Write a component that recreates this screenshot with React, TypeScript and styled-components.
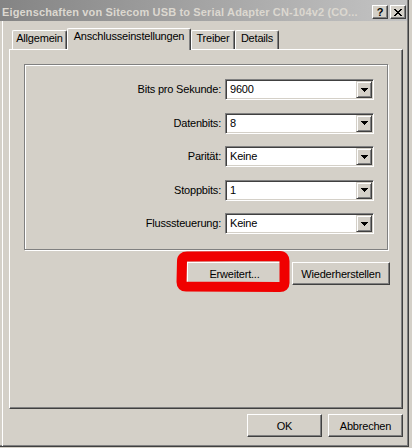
import React from "react";
import styled, { createGlobalStyle } from "styled-components";

const GlobalStyle = createGlobalStyle`
  html, body { margin: 0; padding: 0; background: #d4d0c8; }
  body {
    font-family: "Liberation Sans", Arial, sans-serif;
    font-size: 11px;
    letter-spacing: -0.2px;
    color: #000;
  }
`;

const Window = styled.div`
  position: relative;
  width: 409px;
  height: 447px;
  box-sizing: border-box;
  background: #d4d0c8;
  border-right: 1px solid #404040;
  border-bottom: 1px solid #404040;
  box-shadow: inset -1px -1px 0 #808080;
  display: flex;
  flex-direction: column;
`;

const TitleBar = styled.div`
  height: 21px;
  margin-right: 1px;
  box-sizing: border-box;
  background: linear-gradient(to right, #848484, #c4c4c4);
  display: flex;
  align-items: flex-end;
  gap: 2px;
  padding: 0 1px 2px 2px;
`;

const TitleText = styled.div`
  flex: 1;
  min-width: 0;
  height: 14px;
  line-height: 14px;
  font-weight: bold;
  color: #dcd8d0;
  white-space: nowrap;
  overflow: hidden;
  letter-spacing: 0.15px;
  margin-right: 6px;
`;

const TitleButton = styled.div`
  width: 16px;
  height: 14px;
  box-sizing: border-box;
  background: #d4d0c8;
  border: 1px solid;
  border-color: #fff #404040 #404040 #fff;
  box-shadow: inset -1px -1px 0 #808080;
  display: flex;
  align-items: center;
  justify-content: center;
  font-weight: bold;
  font-size: 11px;
  line-height: 12px;
  letter-spacing: 0;
`;

const Body = styled.div`
  flex: 1;
  margin-left: 2px;
  border-left: 1px solid #fff;
  padding: 7px 5px 0 6px;
  display: flex;
  flex-direction: column;
`;

const TabRow = styled.div`
  height: 21px;
  display: flex;
  align-items: flex-end;
  padding-left: 3px;
  position: relative;
  z-index: 1;
`;

const Tab = styled.div<{ $active?: boolean; $w: number }>`
  width: ${(p) => p.$w}px;
  height: ${(p) => (p.$active ? 22 : 19)}px;
  margin-bottom: ${(p) => (p.$active ? -1 : 0)}px;
  box-sizing: border-box;
  background: #d4d0c8;
  border-left: 1px solid #fff;
  border-top: 1px solid #fff;
  border-right: 1px solid #404040;
  border-radius: 2px 2px 0 0;
  box-shadow: inset -1px 0 0 #808080;
  text-align: center;
  line-height: 14px;
  white-space: nowrap;
`;

const Panel = styled.div`
  height: 360px;
  box-sizing: border-box;
  border: 1px solid;
  border-color: #fff #404040 #404040 #fff;
  box-shadow: inset -1px -1px 0 #808080;
  padding: 14px 14px 0 14px;
  display: flex;
  flex-direction: column;
`;

const GroupBox = styled.div`
  height: 186px;
  box-sizing: border-box;
  border: 1px solid #808080;
  box-shadow: inset 1px 1px 0 #fff, 1px 1px 0 #fff;
  padding: 14px 13px 0 0;
  display: grid;
  grid-template-columns: 1fr 149px;
  grid-auto-rows: 21px;
  column-gap: 4px;
  row-gap: 12.5px;
  align-content: start;
`;

const Label = styled.div`
  text-align: right;
  line-height: 21px;
  white-space: nowrap;
`;

const Combo = styled.div`
  height: 21px;
  box-sizing: border-box;
  border: 1px solid;
  border-color: #808080 #fff #fff #808080;
  box-shadow: inset 1px 1px 0 #404040, inset -1px -1px 0 #d4d0c8;
  background: #fff;
  display: flex;
  align-items: center;
  padding: 1px 1px 1px 4px;
`;

const ComboText = styled.div`
  flex: 1;
  line-height: 17px;
`;

const DropButton = styled.div`
  width: 16px;
  height: 17px;
  box-sizing: border-box;
  background: #d4d0c8;
  border: 1px solid;
  border-color: #d4d0c8 #404040 #404040 #d4d0c8;
  box-shadow: inset 1px 1px 0 #fff, inset -1px -1px 0 #808080;
  display: flex;
  align-items: center;
  justify-content: center;
`;

const ButtonRow = styled.div`
  display: flex;
  justify-content: flex-end;
  gap: 10px;
  margin-top: 12px;
  margin-right: -2px;
`;

const Footer = styled.div`
  display: flex;
  justify-content: flex-end;
  gap: 6px;
  margin-top: 5px;
`;

const Button = styled.div<{ $w: number }>`
  position: relative;
  width: ${(p) => p.$w}px;
  height: 23px;
  box-sizing: border-box;
  background: #d4d0c8;
  border: 1px solid;
  border-color: #fff #404040 #404040 #fff;
  box-shadow: inset -1px -1px 0 #808080;
  display: flex;
  align-items: center;
  justify-content: center;
  white-space: nowrap;
`;

const Scribble = styled.svg`
  position: absolute;
  left: -12px;
  top: -12px;
  width: 114px;
  height: 41px;
  overflow: visible;
  pointer-events: none;
`;

const Arrow = () => (
  <svg width="7" height="4" viewBox="0 0 7 4" shapeRendering="crispEdges">
    <rect x="0" y="0" width="7" height="1" fill="#000" />
    <rect x="1" y="1" width="5" height="1" fill="#000" />
    <rect x="2" y="2" width="3" height="1" fill="#000" />
    <rect x="3" y="3" width="1" height="1" fill="#000" />
  </svg>
);

const rows = [
  { label: "Bits pro Sekunde:", value: "9600" },
  { label: "Datenbits:", value: "8" },
  { label: "Parität:", value: "Keine" },
  { label: "Stoppbits:", value: "1" },
  { label: "Flusssteuerung:", value: "Keine" },
];

export default function App() {
  return (
    <>
      <GlobalStyle />
      <Window>
        <TitleBar>
          <TitleText>Eigenschaften von Sitecom USB to Serial Adapter CN-104v2 (CO...</TitleText>
          <TitleButton>?</TitleButton>
          <TitleButton>
            <svg width="8" height="7" viewBox="0 0 8 7" shapeRendering="crispEdges">
              <path d="M0 0h2v1h-2zM6 0h2v1h-2zM1 1h2v1h-2zM5 1h2v1h-2zM2 2h4v1h-4zM3 3h2v1h-2zM2 4h4v1h-4zM1 5h2v1h-2zM5 5h2v1h-2zM0 6h2v1h-2zM6 6h2v1h-2z" fill="#000" />
            </svg>
          </TitleButton>
        </TitleBar>
        <Body>
          <TabRow>
            <Tab $w={55}>Allgemein</Tab>
            <Tab $w={124} $active>Anschlusseinstellungen</Tab>
            <Tab $w={44}>Treiber</Tab>
            <Tab $w={44}>Details</Tab>
          </TabRow>
          <Panel>
            <GroupBox>
              {rows.map((r) => (
                <React.Fragment key={r.label}>
                  <Label>{r.label}</Label>
                  <Combo>
                    <ComboText>{r.value}</ComboText>
                    <DropButton>
                      <Arrow />
                    </DropButton>
                  </Combo>
                </React.Fragment>
              ))}
            </GroupBox>
            <ButtonRow>
              <Button $w={95}>
                Erweitert...
                <Scribble viewBox="0 0 114 41">
                  <path
                    d="M 6 10 Q 6 5.5 11 5.5 L 104 5 Q 108.5 5 108.5 10 L 108.5 32 Q 108.5 36 104 36 L 10 35.5 Q 5.5 35.5 5.5 31 Z"
                    fill="none"
                    stroke="#f00000"
                    strokeWidth="10"
                    strokeLinejoin="round"
                  />
                </Scribble>
              </Button>
              <Button $w={98}>Wiederherstellen</Button>
            </ButtonRow>
          </Panel>
          <Footer>
            <Button $w={75}>OK</Button>
            <Button $w={75}>Abbrechen</Button>
          </Footer>
        </Body>
      </Window>
    </>
  );
}
